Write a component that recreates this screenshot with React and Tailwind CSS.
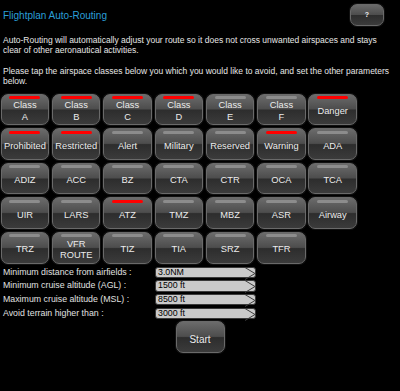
import React from 'react';

const rows = [
  [['Class', 'A', true], ['Class', 'B', true], ['Class', 'C', true], ['Class', 'D', true], ['Class', 'E', false], ['Class', 'F', false], ['Danger', null, true]],
  [['Prohibited', null, true], ['Restricted', null, true], ['Alert', null, false], ['Military', null, false], ['Reserved', null, false], ['Warning', null, true], ['ADA', null, false]],
  [['ADIZ'], ['ACC'], ['BZ'], ['CTA'], ['CTR'], ['OCA'], ['TCA']],
  [['UIR'], ['LARS'], ['ATZ', null, true], ['TMZ'], ['MBZ'], ['ASR'], ['Airway']],
  [['TRZ'], ['VFR', 'ROUTE'], ['TIZ'], ['TIA'], ['SRZ'], ['TFR']],
];

const params = [
  ['Minimum distance from airfields :', '3.0NM'],
  ['Minimum cruise altitude (AGL) :', '1500 ft'],
  ['Maximum cruise altitude (MSL) :', '8500 ft'],
  ['Avoid terrain higher than :', '3000 ft'],
];

const glossy =
  'rounded-[7px] border border-[#6a6a6a] bg-[linear-gradient(to_bottom,#6b6b6b_0%,#4d4d4d_48%,#2d2d2d_52%,#3b3b3b_100%)] shadow-[0_0_0_1px_#111] text-[#ececec]';

function AirspaceButton({ top, bottom, on }) {
  return (
    <button className={`${glossy} flex flex-col items-center h-[31.7px] w-[48.5px] p-0`}>
      <span className={`mt-[1.5px] h-[3px] w-[31px] rounded-full ${on ? 'bg-[#ff0000]' : 'bg-[#8c8c8c]'}`} />
      <span className="flex flex-1 flex-col items-center justify-center text-[9.3px] leading-[11.3px]">
        <span>{top}</span>
        {bottom && <span>{bottom}</span>}
      </span>
    </button>
  );
}

const App = () => {
  return (
    <div className="w-[400px] h-[391px] bg-black text-[#e6e6e6] overflow-hidden" style={{ fontFamily: '"Liberation Sans", Arial, sans-serif' }}>
      <div className="flex items-center justify-between pl-[3px] pr-[16px] pt-[4px]">
        <h1 className="text-[10px] text-[#2a9fd8]">Flightplan Auto-Routing</h1>
        <button className={`${glossy} h-[22px] w-[34px] text-[7px] font-bold pt-[1px]`}>?</button>
      </div>

      <div className="pl-[3px] w-[395px] mt-[8.5px] text-[8.5px] leading-[10.5px]">
        <p>Auto-Routing will automatically adjust your route so it does not cross unwanted airspaces and stays clear of other aeronautical activities.</p>
        <p className="mt-[10px]">Please tap the airspace classes below you which you would like to avoid, and set the other parameters below.</p>
      </div>

      <div className="mt-[7px] ml-[0.7px] grid grid-cols-[repeat(7,48.5px)] gap-x-[2.8px] gap-y-[2.9px]">
        {rows.flat().map(([top, bottom, on], i) => (
          <AirspaceButton key={i} top={top} bottom={bottom} on={!!on} />
        ))}
      </div>

      <div className="mt-[3px] flex flex-col gap-[2.2px] text-[8.8px]">
        {params.map(([label, value]) => (
          <div key={label} className="flex items-center h-[11.5px]">
            <span className="w-[155px] pl-[3px] text-[#e0e0e0]">{label}</span>
            <div className="relative flex items-center h-[11.5px] w-[101px] rounded-[3px] border border-[#3a3a3a] bg-[#cacaca] pl-[2px] text-black">
              {value}
              <svg className="absolute right-[-1px] top-[-1px]" width="12" height="13" viewBox="0 0 12 13">
                <polyline points="1,0.5 11,6.5 1,12.5" fill="none" stroke="#3c3c3c" strokeWidth="1" />
              </svg>
            </div>
          </div>
        ))}
      </div>

      <div className="mt-[2px] flex justify-center">
        <button className={`${glossy} h-[32px] w-[49px] text-[10px] pt-[4px]`}>Start</button>
      </div>
    </div>
  );
};

export default App;
